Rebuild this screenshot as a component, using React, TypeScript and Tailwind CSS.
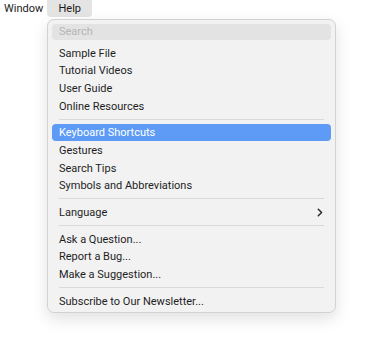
import React from "react";

const Row = ({ label, active, submenu }: { label: string; active?: boolean; submenu?: boolean }) => (
  <div
    className={`h-[17.67px] mx-[4px] px-[7px] rounded-[4px] flex items-center justify-between ${
      active ? "bg-[#5d9bf7] text-white" : "text-[#1e1e1e]"
    }`}
  >
    <span className="leading-none pt-px">{label}</span>
    {submenu && (
      <svg width="6" height="9" viewBox="0 0 6 9" className="mr-[1px]">
        <path d="M1.3 1.2 L4.6 4.5 L1.3 7.8" fill="none" stroke="#2a2a2a" strokeWidth="1.5" strokeLinecap="round" strokeLinejoin="round" />
      </svg>
    )}
  </div>
);

const Sep = () => (
  <div className="h-[9px] flex items-center px-[11px]">
    <div className="h-px w-full bg-[#d9d9d9]" />
  </div>
);

export default function App() {
  return (
    <div className="w-[366px] h-[337px] bg-white relative text-[11px]" style={{ fontFamily: "Roboto, 'Noto Sans', sans-serif" }}>
      <div className="flex items-start h-[19px] text-[#1a1a1a]">
        <div className="pl-[4px] pr-[4px] h-[17px] flex items-center pt-px">Window</div>
        <div className="w-[45px] h-[17px] flex items-center justify-center bg-[#e4e4e4] rounded-b-[4px] pt-px">Help</div>
      </div>
      <div className="absolute left-[47px] top-[19px] w-[289px] h-[294px] bg-[#f2f2f2] border border-[#d2d2d2] rounded-[7px] shadow-[0_6px_16px_rgba(0,0,0,0.12)] pt-[4px]">
        <div className="mx-[4px] h-[16px] bg-[#e3e3e3] rounded-[4px] flex items-center px-[7px] text-[#b5b5b5] pt-px">Search</div>
        <div className="h-[4px]" />
        <Row label="Sample File" />
        <Row label="Tutorial Videos" />
        <Row label="User Guide" />
        <Row label="Online Resources" />
        <Sep />
        <Row label="Keyboard Shortcuts" active />
        <Row label="Gestures" />
        <Row label="Search Tips" />
        <Row label="Symbols and Abbreviations" />
        <Sep />
        <Row label="Language" submenu />
        <Sep />
        <Row label="Ask a Question..." />
        <Row label="Report a Bug..." />
        <Row label="Make a Suggestion..." />
        <Sep />
        <Row label="Subscribe to Our Newsletter..." />
      </div>
    </div>
  );
}
